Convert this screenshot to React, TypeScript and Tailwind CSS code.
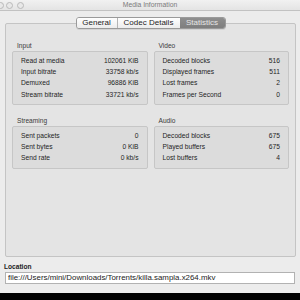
import React from "react";

type Row = [string, string];

const Group = ({ title, rows }: { title: string; rows: Row[] }) => (
  <div className="flex flex-col">
    <div className="h-[9px] pl-[5px] text-[6.6px] leading-[9px] text-[#3a3a3a]">{title}</div>
    <div className="mt-[1px] rounded-[2px] border border-[#c6c6c6] bg-[#dcdcdc] pt-[3px] pb-[4px] pl-[8px] pr-[8px]">
      {rows.map(([k, v]) => (
        <div key={k} className="flex h-[11.3px] items-center justify-between text-[6.7px] text-[#1e1e1e]">
          <span>{k}</span>
          <span>{v}</span>
        </div>
      ))}
    </div>
  </div>
);

export default function App() {
  return (
    <div
      className="relative flex h-[300px] w-[300px] flex-col overflow-hidden bg-[#ececec]"
      style={{ fontFamily: '"Liberation Sans", Arial, sans-serif' }}
    >
      {/* title bar */}
      <div className="relative flex h-[11px] items-center justify-center border-b border-[#c2c2c2] bg-gradient-to-b from-[#f1f1f1] to-[#e4e4e4]">
        <div className="absolute left-[-3px] top-[2px] flex gap-[2px]">
          <div className="h-[7px] w-[7px] rounded-full border border-[#b9b9b9] bg-[#e8e8e8]" />
          <div className="h-[7px] w-[7px] rounded-full border border-[#b9b9b9] bg-[#e8e8e8]" />
          <div className="ml-[2px] h-[7px] w-[7px] rounded-full border border-[#b9b9b9] bg-[#e8e8e8]" />
        </div>
        <span className="text-[6.8px] text-[#7a7a7a]">Media Information</span>
      </div>

      {/* tabs */}
      <div className="relative z-10 mt-[6px] flex h-[12px] justify-center pl-[1px]">
        <div className="flex overflow-hidden rounded-[3px] border border-[#9a9a9a] text-[8px] shadow-[0_1px_0_rgba(0,0,0,0.08)]">
          <div className="flex w-[41px] items-center justify-center border-r border-[#b4b4b4] bg-gradient-to-b from-[#ffffff] to-[#ececec] text-[#1e1e1e]">
            General
          </div>
          <div className="flex w-[62px] items-center justify-center bg-gradient-to-b from-[#ffffff] to-[#ececec] text-[#1e1e1e]">
            Codec Details
          </div>
          <div className="flex w-[45px] items-center justify-center bg-gradient-to-b from-[#8e8e8e] to-[#7e7e7e] text-[#e6e6e6]">
            Statistics
          </div>
        </div>
      </div>

      {/* tab box */}
      <div className="ml-[5px] mr-[4px] -mt-[6px] h-[234px] rounded-[2px] border border-[#c4c4c4] bg-[#e4e4e4] pl-[6px] pr-[6px] pt-[17px]">
        <div className="grid grid-cols-2 gap-x-[6px] gap-y-[11px]">
          <Group
            title="Input"
            rows={[
              ["Read at media", "102061 KiB"],
              ["Input bitrate", "33758 kb/s"],
              ["Demuxed", "96886 KiB"],
              ["Stream bitrate", "33721 kb/s"],
            ]}
          />
          <Group
            title="Video"
            rows={[
              ["Decoded blocks", "516"],
              ["Displayed frames", "511"],
              ["Lost frames", "2"],
              ["Frames per Second", "0"],
            ]}
          />
          <Group
            title="Streaming"
            rows={[
              ["Sent packets", "0"],
              ["Sent bytes", "0 KiB"],
              ["Send rate", "0 kb/s"],
            ]}
          />
          <Group
            title="Audio"
            rows={[
              ["Decoded blocks", "675"],
              ["Played buffers", "675"],
              ["Lost buffers", "4"],
            ]}
          />
        </div>
      </div>

      {/* location */}
      <div className="mt-[5px] pl-[4px] text-[6.6px] font-bold leading-[9px] text-[#222]">Location</div>
      <div className="ml-[5px] mr-[5px] mt-[1px] flex h-[12px] items-center border border-[#b2b2b2] bg-white pl-[2px] text-[7.9px] text-[#222]">
        file:///Users/mini/Downloads/Torrents/killa.sampla.x264.mkv
      </div>
      <div className="flex-1" />
      <div className="h-[7px] bg-black" />
    </div>
  );
}
